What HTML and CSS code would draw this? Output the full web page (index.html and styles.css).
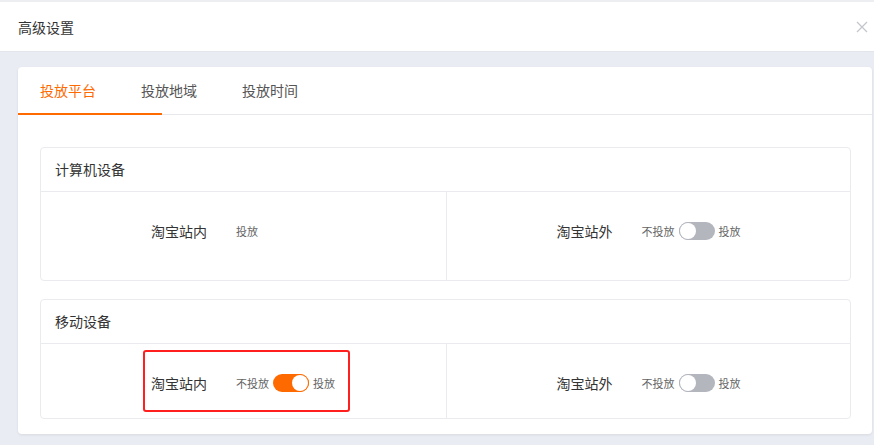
FILE: index.html
```html
<!DOCTYPE html>
<html lang="zh-CN">
<head>
    <meta charset="UTF-8">
    <meta name="viewport" content="width=device-width, initial-scale=1.0">
    <title>高级设置</title>
    <link rel="stylesheet" href="styles.css">
</head>
<body>
    <div class="dialog-header">
        <span class="dialog-title">高级设置</span>
        <svg class="close-btn" width="12" height="12" viewBox="0 0 12 12">
            <path d="M1 1 L11 11 M11 1 L1 11" stroke="#c3c6cc" stroke-width="1.3" fill="none"/>
        </svg>
    </div>

    <div class="main">
        <div class="card">
            <div class="tabs">
                <div class="tab active">投放平台</div>
                <div class="tab">投放地域</div>
                <div class="tab">投放时间</div>
                <div class="ink-bar"></div>
            </div>

            <div class="tab-body">
                <div class="section">
                    <div class="section-title">计算机设备</div>
                    <div class="section-body tall">
                        <div class="cell">
                            <div class="form-item">
                                <span class="item-label">淘宝站内</span>
                                <span class="item-text">投放</span>
                            </div>
                        </div>
                        <div class="cell">
                            <div class="form-item">
                                <span class="item-label">淘宝站外</span>
                                <span class="item-text">不投放</span>
                                <span class="switch"></span>
                                <span class="item-text">投放</span>
                            </div>
                        </div>
                    </div>
                </div>

                <div class="section">
                    <div class="section-title">移动设备</div>
                    <div class="section-body">
                        <div class="cell">
                            <div class="form-item marked">
                                <span class="item-label">淘宝站内</span>
                                <span class="item-text">不投放</span>
                                <span class="switch on"></span>
                                <span class="item-text">投放</span>
                            </div>
                        </div>
                        <div class="cell">
                            <div class="form-item">
                                <span class="item-label">淘宝站外</span>
                                <span class="item-text">不投放</span>
                                <span class="switch"></span>
                                <span class="item-text">投放</span>
                            </div>
                        </div>
                    </div>
                </div>
            </div>
        </div>
    </div>
</body>
</html>
```

FILE: styles.css
```css
* {
    margin: 0;
    padding: 0;
    box-sizing: border-box;
}

body {
    font-family: "Noto Sans CJK SC", "Noto Sans", Arial, sans-serif;
    background: #e9ecf2;
    color: #333;
    font-size: 14px;
}

.dialog-header {
    height: 52px;
    background: #fff;
    border-top: 2px solid #eceef2;
    border-bottom: 1px solid #e2e5ec;
    padding: 0 6px 0 18px;
    display: flex;
    justify-content: space-between;
    align-items: center;
}

.dialog-title {
    font-size: 14px;
    color: #333;
}

.main {
    padding: 15px 2px 10px 18px;
}

.card {
    background: #fff;
    border-radius: 4px;
    box-shadow: 0 1px 3px rgba(0, 0, 0, 0.08);
}

.tabs {
    position: relative;
    display: flex;
    height: 48px;
    border-bottom: 1px solid #e6e8eb;
}

.tab {
    padding: 0 22px;
    line-height: 47px;
    width: 101px;
    color: #555;
    cursor: pointer;
}

.tab.active {
    color: #ff6a00;
}

.ink-bar {
    position: absolute;
    left: 0;
    bottom: -1px;
    width: 144px;
    height: 2px;
    background: #ff6a00;
}

.tab-body {
    padding: 32px 21px 15px 22px;
}

.section {
    border: 1px solid #e9ebef;
    border-radius: 4px;
    margin-bottom: 18px;
}

.section:last-child {
    margin-bottom: 0;
}

.section-title {
    height: 44px;
    line-height: 43px;
    padding: 0 14px;
    border-bottom: 1px solid #e9ebef;
    color: #333;
}

.section-body {
    display: grid;
    grid-template-columns: 1fr 1fr;
}

.cell {
    padding: 19px 0 15px 110px;
}

.section-body.tall .cell {
    padding-bottom: 29px;
}

.cell + .cell {
    border-left: 1px solid #e9ebef;
}

.form-item {
    display: flex;
    align-items: center;
    height: 40px;
    position: relative;
    width: max-content;
}

.item-label {
    width: 57px;
    margin-right: 28px;
    color: #333;
    white-space: nowrap;
}

.item-text {
    font-size: 11px;
    color: #666;
}

.switch {
    position: relative;
    width: 36px;
    height: 18px;
    margin: 0 4px;
    border-radius: 9px;
    background: #b4b6bd;
}

.switch::after {
    content: "";
    position: absolute;
    top: 1px;
    left: 1px;
    width: 16px;
    height: 16px;
    border-radius: 50%;
    background: #fff;
    box-shadow: 0 0 0 1px #b4b6bd;
}

.switch.on {
    background: #ff6a00;
}

.switch.on::after {
    left: 19px;
    box-shadow: 0 0 0 1px #ff6a00;
}

/* red frame drawn round the highlighted item */
.form-item.marked::after {
    content: "";
    position: absolute;
    left: -8px;
    right: -15px;
    top: -13px;
    bottom: -9px;
    border: 2px solid #ff1f1f;
    border-radius: 3px;
}
```
